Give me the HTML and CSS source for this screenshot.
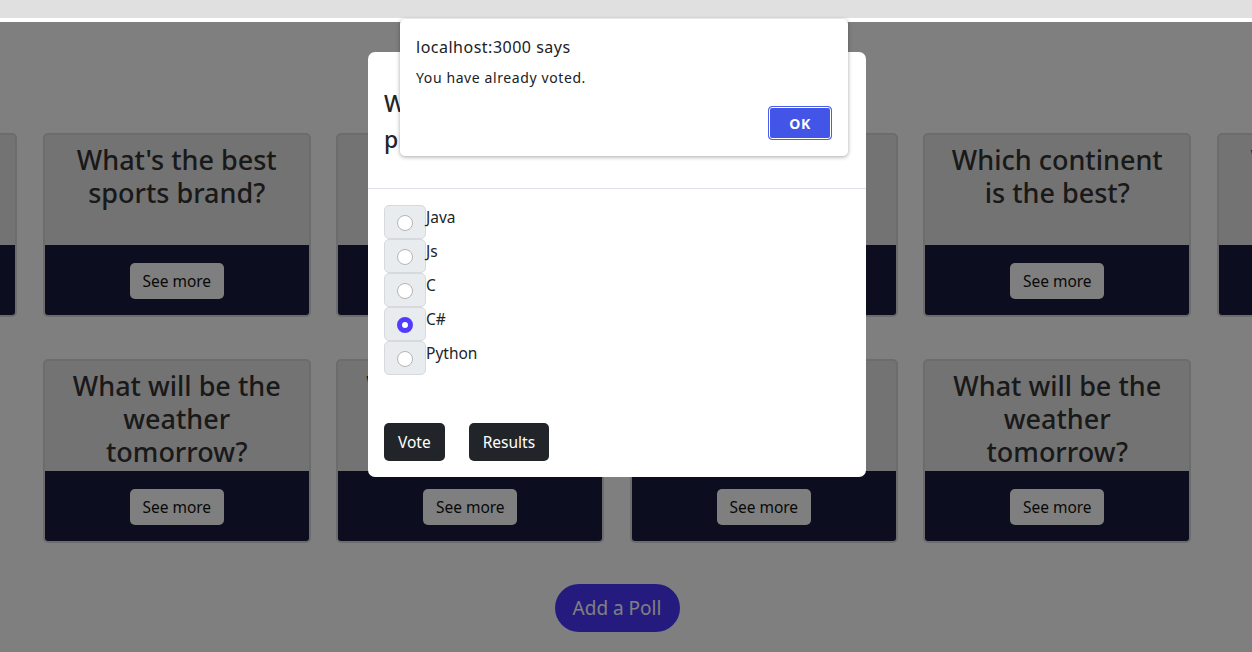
FILE: index.html
```html
<!DOCTYPE html>
<html lang="en">
<head>
<meta charset="utf-8">
<title>Polls</title>
<link rel="stylesheet" href="styles.css">
</head>
<body>
<div class="chrome"></div>
<div class="viewport">
  <main class="page">
    <div class="poll-row">
      <div class="poll-card">
        <h2 class="poll-title">Who is the best football player?</h2>
        <div class="poll-foot"><button class="see-more">See more</button></div>
      </div>
      <div class="poll-card">
        <h2 class="poll-title">What's the best sports brand?</h2>
        <div class="poll-foot"><button class="see-more">See more</button></div>
      </div>
      <div class="poll-card">
        <h2 class="poll-title">Best programming language?</h2>
        <div class="poll-foot"><button class="see-more">See more</button></div>
      </div>
      <div class="poll-card">
        <h2 class="poll-title">What's the best operating system?</h2>
        <div class="poll-foot"><button class="see-more">See more</button></div>
      </div>
      <div class="poll-card">
        <h2 class="poll-title">Which continent is the best?</h2>
        <div class="poll-foot"><button class="see-more">See more</button></div>
      </div>
      <div class="poll-card">
        <h2 class="poll-title">What's the best movie?</h2>
        <div class="poll-foot"><button class="see-more">See more</button></div>
      </div>
    </div>
    <div class="poll-row">
      <div class="poll-card">
        <h2 class="poll-title">What will be the weather tomorrow?</h2>
        <div class="poll-foot"><button class="see-more">See more</button></div>
      </div>
      <div class="poll-card">
        <h2 class="poll-title">What will be the weather tomorrow?</h2>
        <div class="poll-foot"><button class="see-more">See more</button></div>
      </div>
      <div class="poll-card">
        <h2 class="poll-title">Cats or dogs?</h2>
        <div class="poll-foot"><button class="see-more">See more</button></div>
      </div>
      <div class="poll-card">
        <h2 class="poll-title">What will be the weather tomorrow?</h2>
        <div class="poll-foot"><button class="see-more">See more</button></div>
      </div>
    </div>
    <div class="actions">
      <button class="add-poll">Add a Poll</button>
    </div>
  </main>

  <div class="backdrop"></div>

  <div class="modal-wrap">
    <div class="modal">
      <div class="modal-header">
        <h4 class="modal-title">What is your all-time favourite programming language?</h4>
        <button class="btn-close" aria-label="Close">
          <svg width="12" height="12" viewBox="0 0 12 12"><path d="M1 1L11 11M11 1L1 11" stroke="#000" stroke-width="1.4" stroke-linecap="round" fill="none"/></svg>
        </button>
      </div>
      <div class="modal-body">
        <ul class="options">
          <li class="option"><span class="radio-box"><input type="radio" name="lang" class="radio"></span><label class="option-label">Java</label></li>
          <li class="option"><span class="radio-box"><input type="radio" name="lang" class="radio"></span><label class="option-label">Js</label></li>
          <li class="option"><span class="radio-box"><input type="radio" name="lang" class="radio"></span><label class="option-label">C</label></li>
          <li class="option"><span class="radio-box"><input type="radio" name="lang" class="radio" checked></span><label class="option-label">C#</label></li>
          <li class="option"><span class="radio-box"><input type="radio" name="lang" class="radio"></span><label class="option-label">Python</label></li>
        </ul>
        <div class="modal-actions">
          <button class="btn-dark">Vote</button>
          <button class="btn-dark">Results</button>
        </div>
      </div>
    </div>
  </div>
</div>

<div class="js-alert">
  <div class="alert-title">localhost:3000 says</div>
  <div class="alert-message">You have already voted.</div>
  <div class="alert-actions"><button class="alert-ok">OK</button></div>
</div>
</body>
</html>
```

FILE: styles.css
```css
* { box-sizing: border-box; }

html, body {
  margin: 0;
  padding: 0;
  width: 1252px;
  height: 652px;
  overflow: hidden;
  background: #ffffff;
  font-family: "Noto Sans", "Open Sans", sans-serif;
  color: #212529;
}

.chrome {
  height: 22px;
  background: #e0e0e0;
  border-bottom: 4px solid #ffffff;
}

.viewport {
  position: relative;
  height: 630px;
  overflow: hidden;
  background: #ffffff;
}

.page {
  width: 1234px;
  padding-top: 111px;
}

.poll-row {
  display: flex;
  justify-content: center;
  gap: 25.5px;
  margin-bottom: 42px;
}

.poll-card {
  flex: 0 0 268px;
  width: 268px;
  height: 184px;
  border: 2px solid #d9d9d9;
  border-radius: 5px;
  overflow: hidden;
  display: flex;
  flex-direction: column;
  background: #e6e6e6;
}

.poll-title {
  height: 110px;
  margin: 0;
  padding: 8px 16px 0;
  text-align: center;
  font-size: 27px;
  line-height: 33px;
  font-weight: 500;
  color: #333333;
}

.poll-foot {
  flex: 1;
  background: #181a3e;
  display: flex;
  justify-content: center;
  padding-top: 18px;
}

.see-more {
  width: 94px;
  height: 36px;
  border: none;
  border-radius: 5px;
  background: #ffffff;
  color: #111111;
  font-family: inherit;
  font-size: 15.5px;
  padding: 0;
}

.actions {
  display: flex;
  justify-content: center;
  margin-top: -1px;
}

.add-poll {
  width: 125px;
  height: 48px;
  border: none;
  border-radius: 24px;
  background: #4a36ff;
  color: #ffffff;
  font-family: inherit;
  font-size: 19px;
  padding: 0;
}

.backdrop {
  position: absolute;
  inset: 0;
  background: rgba(0, 0, 0, 0.5);
}

.modal-wrap {
  position: absolute;
  top: 0;
  left: 0;
  width: 1234px;
  display: flex;
  justify-content: center;
  padding-top: 30px;
}

.modal {
  width: 498px;
  background: #ffffff;
  border-radius: 7px;
}

.modal-header {
  display: flex;
  align-items: center;
  justify-content: space-between;
  padding: 33px 16px 31px;
  border-bottom: 1px solid #dee2e6;
}

.modal-title {
  margin: 0;
  font-size: 23px;
  line-height: 36px;
  font-weight: 500;
  color: #212529;
  max-width: 420px;
}

.btn-close {
  width: 24px;
  height: 24px;
  border: none;
  background: transparent;
  padding: 0;
  display: flex;
  align-items: center;
  justify-content: center;
  opacity: 0.45;
}

.modal-body {
  padding: 16px;
}

.options {
  list-style: none;
  margin: 0;
  padding: 0;
}

.option {
  display: flex;
  align-items: flex-start;
  height: 34px;
}

.radio-box {
  width: 42px;
  height: 34px;
  background: #e9ecef;
  border: 1px solid #d6dadf;
  border-radius: 5px;
  display: flex;
  align-items: center;
  justify-content: center;
}

.radio {
  appearance: none;
  -webkit-appearance: none;
  width: 16px;
  height: 16px;
  margin: 2px 0 0 0;
  border-radius: 50%;
  border: 1px solid #b5b5b5;
  background: #ffffff;
}

.radio:checked {
  border: 5px solid #4f3cff;
}

.option-label {
  font-size: 15.5px;
  line-height: 24px;
  color: #212529;
}

.modal-actions {
  display: flex;
  gap: 24px;
  margin-top: 48px;
}

.btn-dark {
  height: 38px;
  padding: 0 14px;
  border: none;
  border-radius: 5px;
  background: #212529;
  color: #ffffff;
  font-family: inherit;
  font-size: 15.5px;
}

.js-alert {
  position: absolute;
  left: 400px;
  top: 19px;
  width: 448px;
  height: 137px;
  background: #ffffff;
  border-radius: 5px;
  box-shadow: 0 1px 4px rgba(0, 0, 0, 0.35);
  padding: 18px 16px 16px;
}

.alert-title {
  font-size: 16px;
  line-height: 20px;
  letter-spacing: 0.5px;
  color: #202124;
}

.alert-message {
  margin-top: 11px;
  font-size: 14px;
  line-height: 20px;
  letter-spacing: 0.6px;
  color: #202124;
}

.alert-actions {
  display: flex;
  justify-content: flex-end;
  margin-top: 18px;
}

.alert-ok {
  width: 64px;
  height: 34px;
  border: 1px solid #4b5cf0;
  box-shadow: inset 0 0 0 1px #ffffff;
  border-radius: 4px;
  background: #4355e6;
  color: #ffffff;
  font-family: inherit;
  font-weight: 700;
  font-size: 14px;
  letter-spacing: 0.5px;
}
```
